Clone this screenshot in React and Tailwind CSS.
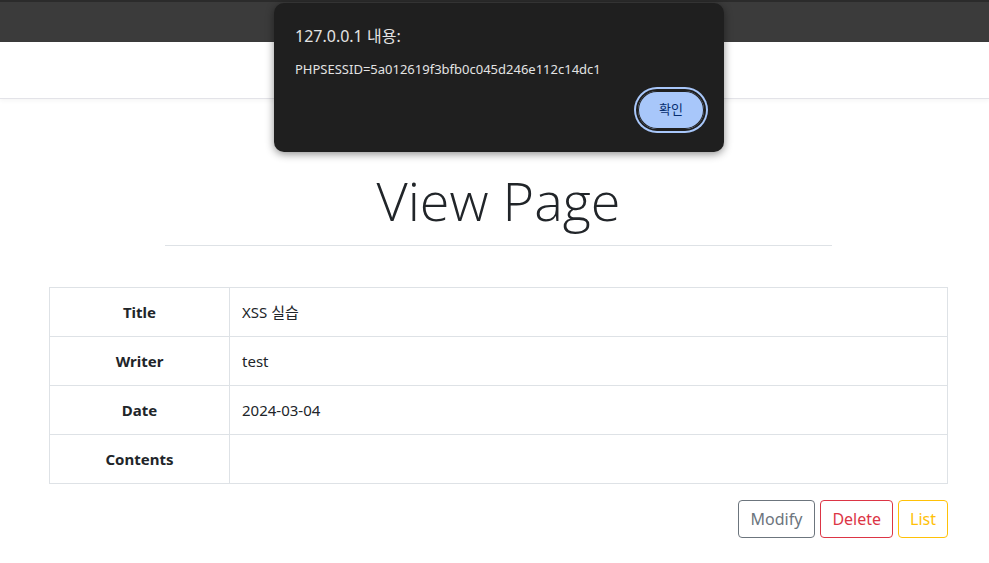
const rows = [
  { label: 'Title', value: 'XSS 실습' },
  { label: 'Writer', value: 'test' },
  { label: 'Date', value: '2024-03-04' },
  { label: 'Contents', value: '' },
];

const AlertDialog = () => (
  <div className="absolute left-[274px] top-[3px] w-[450px] h-[149px] rounded-[10px] bg-[#1f1f1f] shadow-[0_2px_8px_rgba(0,0,0,0.45)] px-[21px] pt-[22px]">
    <div className="text-[16px] leading-[22px] text-[#e3e3e3]">127.0.0.1 내용:</div>
    <div className="mt-[13px] text-[13px] leading-[18px] text-[#e3e3e3]">PHPSESSID=5a012619f3bfb0c045d246e112c14dc1</div>
    <div className="flex justify-end mt-[11px]">
      <button className="mr-[-3px] w-[70px] h-[42px] rounded-full bg-[#a8c7fa] text-[#062e6f] text-[13px] border-[2px] border-[#1f1f1f] ring-[2px] ring-[#a8c7fa] shadow-[inset_0_0_0_1px_#1f1f1f]">
        확인
      </button>
    </div>
  </div>
);

export default function App() {
  return (
    <div className="relative min-h-[563px] bg-white text-[#212529] font-['Segoe_UI','Noto_Sans','Noto_Sans_CJK_KR',sans-serif]">
      <div className="h-[42px] bg-[#3b3b3b] border-t-[2px] border-[#2b2b2b]" />
      <div className="h-[57px] bg-white border-b border-[#e3e3e8] shadow-[0_2px_4px_rgba(0,0,0,0.04)]" />

      <div className="ml-[165px] w-[667px] mt-[67px] border-b border-[#dee2e6] pb-[10px] text-center">
        <h1 className="text-[54px] leading-[69px] font-light font-['Segoe_UI','Open_Sans',sans-serif]">View Page</h1>
      </div>

      <div className="ml-[49px] mr-[41px] mt-[41px]">
        <table className="w-full border-collapse border border-[#dee2e6] text-[15px]">
          <tbody>
            {rows.map((r) => (
              <tr key={r.label} className="h-[49px]">
                <th className="w-[180px] border border-[#dee2e6] text-center font-bold">{r.label}</th>
                <td className="border border-[#dee2e6] px-[12px] text-left">{r.value}</td>
              </tr>
            ))}
          </tbody>
        </table>
        <div className="flex justify-end gap-[5px] mt-[16px]">
          <button className="h-[38px] px-[12px] rounded-[4px] border border-[#6c757d] text-[#6c757d] text-[16px]">Modify</button>
          <button className="h-[38px] px-[11px] rounded-[4px] border border-[#dc3545] text-[#dc3545] text-[16px]">Delete</button>
          <button className="h-[38px] px-[11px] rounded-[4px] border border-[#ffc107] text-[#ffc107] text-[16px]">List</button>
        </div>
      </div>

      <AlertDialog />
    </div>
  );
}
